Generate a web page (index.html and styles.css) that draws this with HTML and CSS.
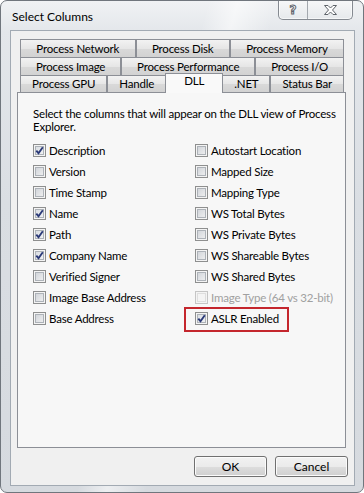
FILE: index.html
```html
<!DOCTYPE html>
<html>
<head>
<title>Select Columns</title>
<link rel="stylesheet" href="styles.css">
</head>
<body>
<div class="window">
	<div class="titlebar">
		<span class="title">Select Columns</span>
		<div class="caption">
			<span class="cap-btn help">?</span>
			<span class="cap-btn close">
				<svg width="13" height="10" viewBox="0 0 13 10"><path d="M0.5 0.5 H4 L6.5 3 L9 0.5 H12.5 L8.5 5 L12.5 9.5 H9 L6.5 7 L4 9.5 H0.5 L4.5 5 Z" fill="#fdfdfd" stroke="#5f646b" stroke-width="1" stroke-linejoin="round"/></svg>
			</span>
		</div>
	</div>
	<div class="client">
		<div class="tabs">
			<div class="tab-row">
				<span class="tab">Process Network</span>
				<span class="tab">Process Disk</span>
				<span class="tab">Process Memory</span>
			</div>
			<div class="tab-row">
				<span class="tab">Process Image</span>
				<span class="tab">Process Performance</span>
				<span class="tab">Process I/O</span>
			</div>
			<div class="tab-row last">
				<span class="tab">Process GPU</span>
				<span class="tab">Handle</span>
				<span class="tab selected">DLL</span>
				<span class="tab">.NET</span>
				<span class="tab">Status Bar</span>
			</div>
		</div>
		<div class="panel">
			<p class="intro">Select the columns that will appear on the DLL view of Process Explorer.</p>
			<div class="checks">
				<div class="col">
					<label class="check checked"><span class="box"><svg width="9" height="9" viewBox="0 0 9 9"><path d="M1.3 4.6 L3.5 7.2 L7.8 1.3" fill="none" stroke="#2b3a78" stroke-width="1.9"/></svg></span>Description</label>
					<label class="check"><span class="box"></span>Version</label>
					<label class="check"><span class="box"></span>Time Stamp</label>
					<label class="check checked"><span class="box"><svg width="9" height="9" viewBox="0 0 9 9"><path d="M1.3 4.6 L3.5 7.2 L7.8 1.3" fill="none" stroke="#2b3a78" stroke-width="1.9"/></svg></span>Name</label>
					<label class="check checked"><span class="box"><svg width="9" height="9" viewBox="0 0 9 9"><path d="M1.3 4.6 L3.5 7.2 L7.8 1.3" fill="none" stroke="#2b3a78" stroke-width="1.9"/></svg></span>Path</label>
					<label class="check checked"><span class="box"><svg width="9" height="9" viewBox="0 0 9 9"><path d="M1.3 4.6 L3.5 7.2 L7.8 1.3" fill="none" stroke="#2b3a78" stroke-width="1.9"/></svg></span>Company Name</label>
					<label class="check"><span class="box"></span>Verified Signer</label>
					<label class="check"><span class="box"></span>Image Base Address</label>
					<label class="check"><span class="box"></span>Base Address</label>
				</div>
				<div class="col">
					<label class="check"><span class="box"></span>Autostart Location</label>
					<label class="check"><span class="box"></span>Mapped Size</label>
					<label class="check"><span class="box"></span>Mapping Type</label>
					<label class="check"><span class="box"></span>WS Total Bytes</label>
					<label class="check"><span class="box"></span>WS Private Bytes</label>
					<label class="check"><span class="box"></span>WS Shareable Bytes</label>
					<label class="check"><span class="box"></span>WS Shared Bytes</label>
					<label class="check disabled"><span class="box"></span>Image Type (64 vs 32-bit)</label>
					<label class="check checked highlight"><span class="box"><svg width="9" height="9" viewBox="0 0 9 9"><path d="M1.3 4.6 L3.5 7.2 L7.8 1.3" fill="none" stroke="#2b3a78" stroke-width="1.9"/></svg></span>ASLR Enabled</label>
				</div>
			</div>
		</div>
		<div class="buttons">
			<span class="btn">OK</span>
			<span class="btn">Cancel</span>
		</div>
	</div>
</div>
</body>
</html>
```
FILE: styles.css
```css
body{
	margin:0;
	background:#fff;
	font-family:"Segoe UI", Lato, sans-serif;
	font-size:11.5px;
	letter-spacing:-0.2px;
	color:#000;
}
.window{
	width:364px;
	height:493px;
	box-sizing:border-box;
	border:1px solid #70767d;
	border-radius:7px;
	overflow:hidden;
	display:flex;
	flex-direction:column;
	/*glass frame, with a faint streak across the title*/
	background:
		linear-gradient(105deg, rgba(255,255,255,0) 42%, rgba(255,255,255,0.55) 48%, rgba(255,255,255,0) 56%),
		linear-gradient(to bottom, #f0f2f4 0px, #e4e7eb 30px, #dadee3 200px, #d6dadf 100%);
}
.titlebar{
	height:29px;
	flex:none;
	display:flex;
	justify-content:space-between;
	align-items:flex-start;
	padding:0 10px 0 11px;
}
.title{
	padding-top:8px;
	line-height:15px;
	font-size:12px;
	letter-spacing:0;
	color:#000;
}
.caption{
	display:flex;
	height:19px;
	margin-top:-1px;
	border:1px solid #858a91;
	border-top:none;
	border-radius:0 0 5px 5px;
	overflow:hidden;
	background:linear-gradient(to bottom, #f7f8f9, #e6e9ec);
	box-shadow:inset 0 0 0 1px rgba(255,255,255,0.6);
}
.cap-btn{
	display:flex;
	align-items:center;
	justify-content:center;
}
.help{
	width:28px;
	font-family:"DejaVu Sans", sans-serif;
	font-size:12px;
	font-weight:bold;
	color:#fdfdfd;
	-webkit-text-stroke:1px #5f646b;
	padding-top:1px;
}
.close{
	width:44px;
	border-left:1px solid #a3a8ae;
}
.client{
	flex:1;
	margin:0 8px 6px 9px;
	border:1px solid #a2aab3;
	background:#f0f0f0;
	display:flex;
	flex-direction:column;
}
.tabs{
	margin:8px 10px 0 9px;
}
.tab-row{
	display:flex;
	height:18px;
}
.tab-row.last{
	height:17px;
}
.tab{
	flex:1 1 auto;
	box-sizing:border-box;
	height:18px;
	border:1px solid #8c8f96;
	border-bottom:none;
	background:linear-gradient(to bottom, #f2f2f2, #e6e6e6 50%, #d9d9d9 51%, #d2d2d2);
	text-align:center;
	line-height:17px;
	white-space:nowrap;
}
.tab-row.last .tab{
	height:17px;
	line-height:16px;
}
.tab.selected{
	position:relative;
	z-index:1;
	padding:0 7px;
	margin:-2px -1px -1px;
	background:#f9f9f9;
}
.tab-row.last .tab.selected{
	height:20px;
	line-height:14px;
}
.panel{
	flex:1;
	margin:0 8px 0 6px;
	border:1px solid #8c8f96;
	background:#f7f7f7;
	padding:14px 0 0 15px;
}
.intro{
	margin:0 4px 0 0;
	line-height:13px;
}
.checks{
	display:flex;
	margin-top:7px;
}
.col{
	display:flex;
	flex-direction:column;
}
.col:first-child{
	width:162px;
}
.check{
	display:flex;
	align-items:center;
	align-self:flex-start;
	height:21px;
	white-space:nowrap;
}
.box{
	width:13px;
	height:13px;
	box-sizing:border-box;
	margin-right:3px;
	border:1px solid #8e8f8f;
	background:linear-gradient(135deg, #cbcfd5, #f4f4f4);
	box-shadow:inset 0 0 0 1px #f4f4f4, inset 0 0 0 2px #adb2b8;
	display:flex;
	align-items:center;
	justify-content:center;
}
.checked .box{
	background:linear-gradient(135deg, #d4d9df, #f7f7f7);
}
.disabled{
	color:#a0a0a0;
}
.disabled .box{
	border-color:#c5c5c5;
	background:#f4f4f4;
	box-shadow:inset 0 0 0 1px #f4f4f4, inset 0 0 0 2px #dedede;
}
.highlight{
	position:relative;
}
.highlight::after{
	content:"";
	position:absolute;
	left:-11px;
	right:-10px;
	top:-1px;
	bottom:-3px;
	border:2px solid #c4262d;
}
.buttons{
	display:flex;
	justify-content:flex-end;
	gap:8px;
	padding:8px 6px 8px 0;
}
.btn{
	width:73px;
	height:21px;
	box-sizing:border-box;
	border:1px solid #707070;
	border-radius:3px;
	background:linear-gradient(to bottom, #f2f2f2 0%, #ebebeb 50%, #dddddd 51%, #cfcfcf 100%);
	box-shadow:inset 0 0 0 1px #fbfbfb;
	text-align:center;
	line-height:19px;
	font-size:12px;
	letter-spacing:0;
}
```
